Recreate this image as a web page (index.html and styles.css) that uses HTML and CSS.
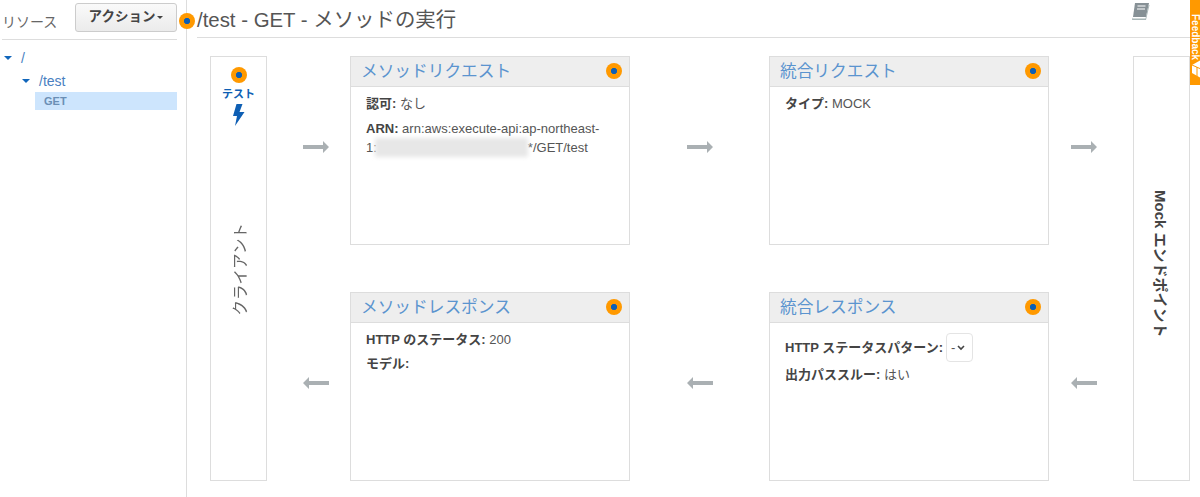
FILE: index.html
```html
<!DOCTYPE html>
<html lang="ja">
<head>
<meta charset="utf-8">
<title>GET - メソッドの実行</title>
<link rel="stylesheet" href="styles.css">
</head>
<body>
<div class="app">
  <aside class="side">
    <div class="side-head">
      <span class="side-title">リソース</span>
      <button class="action">アクション<i class="caret dark"></i></button>
    </div>
    <ul class="tree">
      <li class="node"><i class="caret"></i><span>/</span></li>
      <li class="node sub"><i class="caret"></i><span>/test</span></li>
      <li class="leaf">GET</li>
    </ul>
  </aside>
  <main class="main">
    <i class="dot head-dot"></i>
    <header class="head">
      <h1>/test - GET - メソッドの実行</h1>
      <svg class="book" viewBox="0 0 20 20" width="20" height="20"><path d="M5 1h14l-3 14H3z" fill="#879196"/><path d="M2.500 15.500 2 18h14l3.500-15-1 0-3 13.500H3.600c-.6 0-1-.4-1.100-1z" fill="#aab7b8"/><path d="M7.500 4h8M7 7h8" stroke="#fff" stroke-width="1.200"/></svg>
    </header>
    <div class="flow">
      <section class="client">
        <i class="dot"></i>
        <a class="test">テスト</a>
        <svg class="bolt" viewBox="0 0 12 22" width="12" height="22"><path d="M3.500 0 0 12h4l-2 10L11.500 8H6.500l3-8z" fill="#0e5fb4"/></svg>
        <span class="vert-l">クライアント</span>
      </section>
      <svg class="arrow first r1" viewBox="0 0 26 12" width="26" height="12"><path d="M0 4h20V0l6 6-6 6V8H0z" fill="#aab0b3"/></svg>
      <section class="card c-left r1">
        <div class="card-head"><h2>メソッドリクエスト</h2><i class="dot"></i></div>
        <div class="card-body">
          <p><b>認可:</b> なし</p>
          <p><b>ARN:</b> arn:aws:execute-api:ap-northeast-<br>1:<span class="blur"></span>*/GET/test</p>
        </div>
      </section>
      <svg class="arrow r1 mid" viewBox="0 0 26 12" width="26" height="12"><path d="M0 4h20V0l6 6-6 6V8H0z" fill="#aab0b3"/></svg>
      <section class="card c-right r1">
        <div class="card-head"><h2>統合リクエスト</h2><i class="dot"></i></div>
        <div class="card-body">
          <p><b>タイプ:</b> MOCK</p>
        </div>
      </section>
      <svg class="arrow last r1" viewBox="0 0 26 12" width="26" height="12"><path d="M0 4h20V0l6 6-6 6V8H0z" fill="#aab0b3"/></svg>
      <section class="mock"><span class="vert-r">Mock エンドポイント</span></section>

      <svg class="arrow first r2" viewBox="0 0 26 12" width="26" height="12"><path d="M26 4H6V0L0 6l6 6V8h20z" fill="#aab0b3"/></svg>
      <section class="card c-left r2">
        <div class="card-head"><h2>メソッドレスポンス</h2><i class="dot"></i></div>
        <div class="card-body">
          <p><b>HTTP のステータス:</b> 200</p>
          <p class="model"><b>モデル:</b></p>
        </div>
      </section>
      <svg class="arrow r2 mid" viewBox="0 0 26 12" width="26" height="12"><path d="M26 4H6V0L0 6l6 6V8h20z" fill="#aab0b3"/></svg>
      <section class="card c-right r2">
        <div class="card-head"><h2>統合レスポンス</h2><i class="dot"></i></div>
        <div class="card-body">
          <p class="pattern"><b>HTTP ステータスパターン:</b> <span class="select">-<svg viewBox="0 0 8 6" width="8" height="6"><path d="M1 1l3 3 3-3" fill="none" stroke="#444" stroke-width="1.600"/></svg></span></p>
          <p><b>出力パススルー:</b> はい</p>
        </div>
      </section>
      <svg class="arrow last r2" viewBox="0 0 26 12" width="26" height="12"><path d="M26 4H6V0L0 6l6 6V8h20z" fill="#aab0b3"/></svg>
    </div>
  </main>
  <div class="tab">
    <span>Feedback</span>
    <svg class="cube" viewBox="0 0 10 20" width="10" height="20"><path d="M10 1 1 6v8l9 5z" fill="#fff"/><path d="M1 6l9 4M6 8v10" stroke="#ff9900" fill="none"/></svg>
  </div>
</div>
</body>
</html>
```
FILE: styles.css
```css
* { box-sizing: border-box; }
html, body { margin: 0; height: 497px; overflow: hidden; background: #fff; }
body { font-family: "Liberation Sans", "Noto Sans CJK JP", sans-serif; font-size: 13px; color: #444; }
.app { display: flex; height: 497px; position: relative; }

.side { width: 187px; border-right: 1px solid #ddd; padding: 0 9px 0 2px; flex: none; }
.side-head { display: flex; justify-content: space-between; align-items: flex-start; height: 40px; border-bottom: 1px solid #ddd; padding-top: 3px; }
.side-title { font-size: 14px; color: #666; margin-top: 8px; }
.action { width: 102px; height: 29px; border: 1px solid #ccc; border-radius: 3px; background: linear-gradient(#fafafa, #ebebeb); font: bold 13.500px "Liberation Sans", "Noto Sans CJK JP", sans-serif; color: #444; padding: 0 0 6px; }
.caret { display: inline-block; width: 0; height: 0; border-left: 4px solid transparent; border-right: 4px solid transparent; border-top: 4px solid #1166bb; }
.caret.dark { border-left-width: 3px; border-right-width: 3px; border-top: 3px solid #444; margin-left: 2px; vertical-align: 2px; }
.tree { list-style: none; margin: 0; padding: 6px 0 0 2px; }
.node { display: flex; align-items: center; gap: 9px; height: 23px; color: #4a7fc1; font-size: 14px; }
.node.sub { padding-left: 18px; }
.leaf { margin-left: 31px; height: 18px; line-height: 18px; background: #cde5fd; padding-left: 9px; font-size: 11px; font-weight: bold; color: #6b8fb5; }

.main { flex: 1; padding: 0 0 0 10px; position: relative; min-width: 0; }
.head { height: 38px; border-bottom: 1px solid #ddd; display: flex; justify-content: space-between; padding-right: 50px; }
.head h1 { margin: 0; font-size: 20.400px; font-weight: normal; color: #555; line-height: 41px; }
.book { margin-top: 2px; }

.dot { display: block; flex: none; width: 16px; height: 16px; border-radius: 50%; background: radial-gradient(circle, #0e5fb4 0 2.800px, #ff9900 3.400px); }
.head-dot { position: absolute; left: -8px; top: 13px; }

.flow { display: grid; grid-template-columns: 57px 83px 280px 139px 280px 84px 57px; grid-template-rows: 189px 47px 189px; margin: 18px 0 0 13px; }
.client { grid-row: 1 / 4; grid-column: 1; border: 1px solid #ddd; display: flex; flex-direction: column; align-items: center; padding-top: 10px; }
.mock { grid-row: 1 / 4; grid-column: 7; border: 1px solid #ddd; display: flex; justify-content: center; align-items: flex-start; padding-top: 133px; }
.test { font-size: 11px; font-weight: bold; color: #0e5fb4; margin-top: 2px; }
.bolt { margin-top: 3px; }
.vert-l { writing-mode: vertical-rl; text-orientation: sideways; transform: rotate(180deg); font-size: 15.500px; color: #666; margin-top: 97px; }
.vert-r { writing-mode: vertical-rl; text-orientation: sideways; font-size: 15px; font-weight: bold; color: #444; }

.arrow { align-self: start; margin-top: 85px; }
.arrow.r1, .card.r1 { grid-row: 1; }
.arrow.r2, .card.r2 { grid-row: 3; }
.arrow.first { grid-column: 2; justify-self: start; margin-left: 36px; }
.arrow.mid { grid-column: 4; justify-self: center; }
.arrow.last { grid-column: 6; justify-self: start; margin-left: 22px; }
.c-left { grid-column: 3; }
.c-right { grid-column: 5; }

.card { border: 1px solid #ddd; }
.card-head { height: 30px; background: #eee; border-bottom: 1px solid #ddd; display: flex; justify-content: space-between; align-items: center; padding: 0 7px 0 10px; }
.card-head h2 { margin: 0 0 3px; font-size: 16.700px; font-weight: normal; color: #5b94cf; }
.card-head .dot { margin-bottom: 1px; }
.card-body { padding: 8px 15px; }
.card-body p { margin: 0 0 7px; line-height: 18px; color: #555; }
.card-body b { color: #444; }
.model { position: relative; top: -1px; }
.blur { display: inline-block; width: 153px; height: 19px; margin-left: -2px; background: #e7e7e7; filter: blur(2px); vertical-align: -5px; }
.card-body .pattern { display: flex; align-items: center; gap: 3px; height: 29px; margin: 2px 0 4px; }
.select { display: inline-flex; align-items: center; gap: 2px; width: 27px; height: 29px; border: 1px solid #e4e4e4; border-radius: 4px; padding-left: 4px; }

.tab { position: absolute; right: 0; top: 0; width: 10px; height: 85px; background: #ff9900; overflow: hidden; display: flex; flex-direction: column; }
.tab span { writing-mode: vertical-rl; text-orientation: sideways; color: #fff; font-size: 10px; font-weight: bold; margin: 14px 0 0 7px; white-space: nowrap; line-height: 10px; }
.cube { position: absolute; left: 1px; top: 59px; }
```
